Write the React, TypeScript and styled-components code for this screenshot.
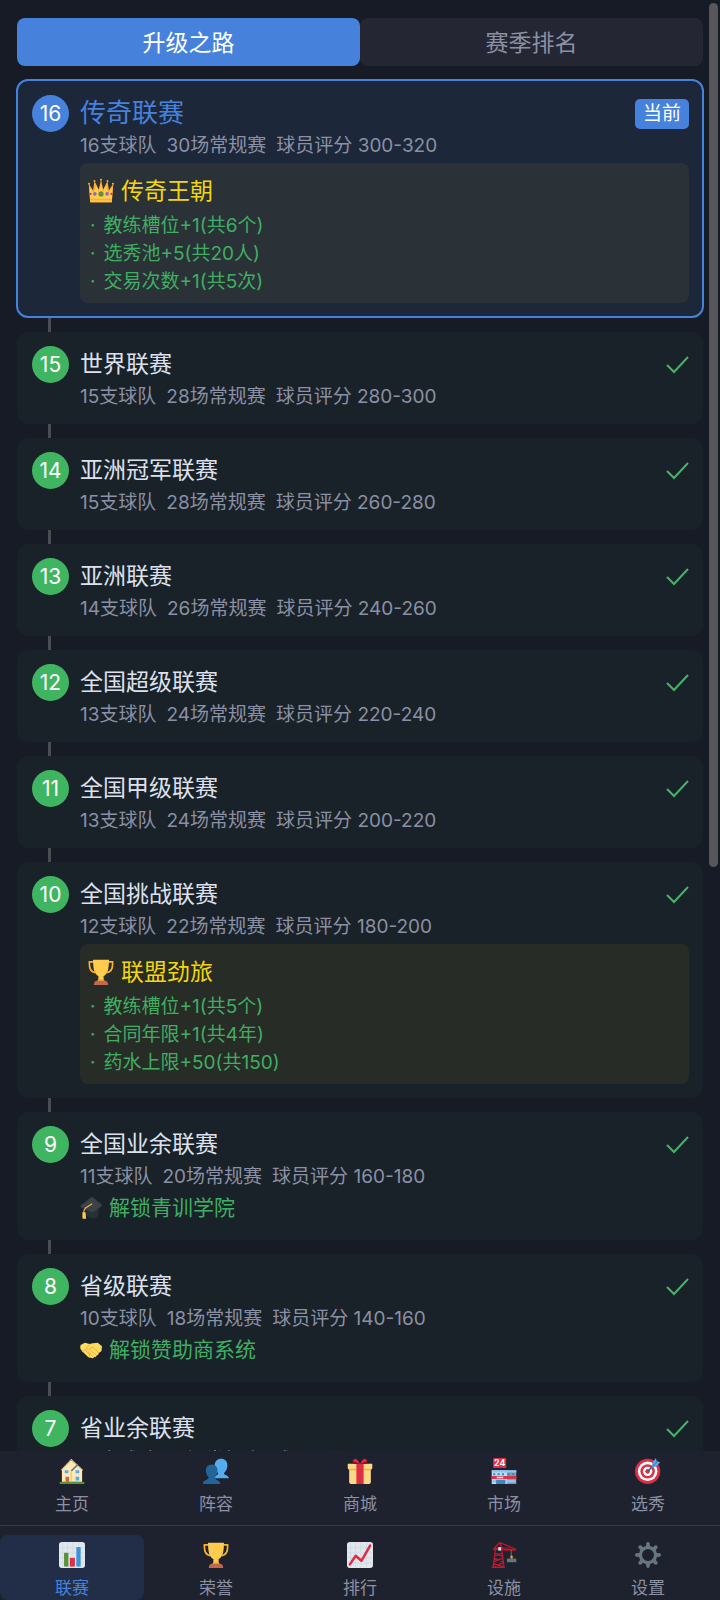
import React from "react";
import styled, { createGlobalStyle, css } from "styled-components";

const GlobalStyle = createGlobalStyle`
  * { box-sizing: border-box; }
  body {
    margin: 0;
    background: #171b25;
    font-family: Inter, "Noto Sans CJK SC", sans-serif;
    color: #dde1ee;
  }
  button { font: inherit; border: 0; margin: 0; padding: 0; cursor: pointer; }
  h2, h3, p, ul, ol { margin: 0; padding: 0; font-weight: 400; list-style: none; }
`;

const c = {
  blue: "#4682dc",
  green: "#40b561",
  greenText: "#3fae62",
  gold: "#f5d60c",
  muted: "#8b90a4",
  nav: "#1e222e",
};

/* ---------- emoji drawings ---------- */

const Svg = styled.svg<{ $size: number }>`
  display: block;
  flex: none;
  width: ${(p) => p.$size}px;
  height: ${(p) => p.$size}px;
`;

type EmojiName =
  | "crown" | "trophy" | "cap" | "handshake" | "house" | "people" | "gift"
  | "store" | "target" | "bars" | "chart" | "crane" | "gear";

const drawings: Record<EmojiName, React.ReactNode> = {
  crown: (
    <>
      <path fill="#ffac33" d="M1 8l6 9 2-13 6 12 3-14 3 14 6-12 2 13 6-9-2 26H3z" />
      <path fill="#ffcc4d" d="M2 13l6 8 3-10 4 8 3-11 3 11 4-8 3 10 6-8-1 20H3z" />
      <path fill="#ffac33" d="M3 29h30v2H3z" />
      <circle cx="1.500" cy="8" r="1.400" fill="#ffac33" />
      <circle cx="34.500" cy="8" r="1.400" fill="#ffac33" />
      <circle cx="9" cy="4" r="1.400" fill="#ffac33" />
      <circle cx="27" cy="4" r="1.400" fill="#ffac33" />
      <circle cx="18" cy="2.500" r="1.400" fill="#ffac33" />
      <circle cx="18" cy="22" r="3.600" fill="#5c913b" />
      <circle cx="9.500" cy="22" r="2.500" fill="#9266cc" />
      <circle cx="26.500" cy="22" r="2.500" fill="#9266cc" />
      <circle cx="3.500" cy="22" r="1.600" fill="#dd2e44" />
      <circle cx="32.500" cy="22" r="1.600" fill="#dd2e44" />
    </>
  ),
  trophy: (
    <>
      <path fill="none" stroke="#ffac33" strokeWidth="2.400" d="M9 4H2c-.6 8 1 14 8 15M27 4h7c.6 8-1 14-8 15" />
      <path fill="#ffac33" d="M15 20h6l1 9 4 4H10l4-4z" />
      <path fill="#ffcc4d" d="M7 1h22c0 14-2 20-8 23v4h-6v-4C9 21 7 15 7 1z" />
      <path fill="#c1694f" d="M8 36c0-4 2-6 5-6h10c3 0 5 2 5 6z" />
    </>
  ),
  cap: (
    <>
      <path fill="#292f33" d="M10 16l16-4 4 6c1 7 0 13-2 15-5 3-13 2-18-3z" />
      <path fill="#3a4249" d="M1 14L18 1c1-1 2-1 3 0l14 11c1 1 1 2 0 3L22 25c-1 1-2 1-3 0L2 17c-1-1-2-2-1-3z" />
      <path fill="none" stroke="#ffac33" strokeWidth="2" d="M20 11L9 18c-2 2-3 5-3 9" />
      <path fill="#ffcc4d" d="M4 25h5l1 10c-2 1-4 1-6 0z" />
    </>
  ),
  handshake: (
    <>
      <path fill="#ef9645" d="M2 12l8-4 17 2 8 7-6 9-9 5-6-1L3 20z" />
      <path fill="#ffdc5d" d="M1 10l7-4 8 2 5-1 8-1 7 6-1 8-5 3c1 2-1 4-3 3 0 3-2 4-4 3-1 3-4 3-6 1-2 1-4 0-5-2L3 19C0 17 0 13 1 10z" />
      <path fill="none" stroke="#ef9645" strokeWidth="1.200" strokeLinecap="round" strokeLinejoin="round" d="M17 8l-6 6c-1 3 3 4 5 2l4-3 10 9M18 19l8 7M14 22l7 7M5 19l4-2 2 4 4 3 1 4" />
    </>
  ),
  house: (
    <>
      <path fill="#5c913b" d="M1 33h34v3H1z" />
      <path fill="#ffe8b6" d="M4 16L17 3l15 13v17H4z" />
      <path fill="#ffcc4d" d="M16 19h2v14h-2z" />
      <path fill="none" stroke="#d9c193" strokeWidth="1.400" d="M3 17L17 2l16 15" />
      <path fill="none" stroke="#66757f" strokeWidth="2.400" d="M17 18l9-9" />
      <path fill="#c1694f" d="M9 26h5v7H9z" />
      <path fill="#55acee" d="M8 17h5v4H8zM23 17h5v4h-5zM23 26h5v5h-5z" />
    </>
  ),
  people: (
    <>
      <path fill="#55acee" d="M16 28c1-5 5-4 5-7-7-6-7-20 4-20s11 14 4 20c0 3 6 2 7 7z" />
      <path fill="#226699" d="M0 36c0-6 7-5 8-9-6-6-6-18 4-18s10 12 4 18c1 4 7 3 8 9z" />
    </>
  ),
  gift: (
    <>
      <path fill="#fdd888" d="M3 11h30v22c0 2-1 3-3 3H6c-2 0-3-1-3-3z" />
      <path fill="#fdd888" d="M1 8h34v5c0 2-1 3-3 3H4c-2 0-3-1-3-3z" />
      <path fill="#fcab40" d="M3 15h30v2H3z" />
      <path fill="#dd2e44" d="M13 8h10v28H13z" />
      <path fill="#a0041e" d="M17 8C8 9 6 6 8 3c2-4 7 0 10 5 3-5 8-9 10-5 2 3 0 6-9 5z" />
      <path fill="#dd2e44" d="M17 8L8 4l3-3c3 0 5 3 6 7zM19 8l9-4-3-3c-3 0-5 3-6 7z" />
    </>
  ),
  store: (
    <>
      <rect x="3" width="18" height="14" rx="1" fill="#dd2e44" />
      <text x="12" y="11.500" textAnchor="middle" fontFamily="Inter, sans-serif" fontWeight="700" fontSize="12" fill="#fff">24</text>
      <path fill="#bdddf4" d="M1 17h22v19H1z" />
      <path fill="#8899a6" d="M22 17h13v19H22z" />
      <path fill="#88c9f9" d="M1 17h34v3H1z" />
      <path fill="#3b88c3" d="M3 21h3v3H3zM9 21h3v3H9zM15 21h3v3h-3zM23 21h3v3h-3zM29 21h3v3h-3zM7 30h13v6H7z" />
      <path fill="#dd2e44" d="M1 25h34v4H1z" />
      <path fill="#fff" d="M8 26h9v2H8z" />
      <path fill="#88c9f9" d="M2 30h5v4H2zM22 30h12v4H22z" />
    </>
  ),
  target: (
    <>
      <circle cx="17.500" cy="18.500" r="17.500" fill="#dd2e44" />
      <circle cx="17.500" cy="18.500" r="13.500" fill="#fff" />
      <circle cx="17.500" cy="18.500" r="10" fill="#dd2e44" />
      <circle cx="17.500" cy="18.500" r="6.500" fill="#fff" />
      <circle cx="17.500" cy="18.500" r="3.200" fill="#dd2e44" />
      <path stroke="#226699" strokeWidth="2" d="M18 18L28 8" />
      <path fill="#55acee" d="M24 7l5-7 1 5 5 1-6 6-6 1z" />
      <path stroke="#3b88c3" strokeWidth="1.500" d="M24 12l8-8" />
    </>
  ),
  bars: (
    <>
      <rect width="36" height="36" rx="4" fill="#e1e8ed" />
      <path stroke="#ccd6dd" strokeWidth="1" d="M5 1v34M12 1v34M19 1v34M27 1v34M1 8h34M1 15h34M1 22h34M1 29h34" />
      <path fill="#5c913b" d="M7 15h6v19H7z" />
      <path fill="#dd2e44" d="M15 22h7v12h-7z" />
      <path fill="#3b94d9" d="M24 7h6v27h-6z" />
    </>
  ),
  chart: (
    <>
      <rect width="36" height="36" rx="4" fill="#e1e8ed" />
      <path stroke="#ccd6dd" strokeWidth="1" d="M5 1v34M12 1v34M19 1v34M27 1v34M1 8h34M1 15h34M1 22h34M1 29h34" />
      <path fill="none" stroke="#dd2e44" strokeWidth="3.500" strokeLinecap="round" strokeLinejoin="round" d="M4 31l8-12 8 7L32 5" />
    </>
  ),
  crane: (
    <>
      <path fill="none" stroke="#be1931" strokeWidth="1.800" d="M6 10L3 35M15 10l3 25M5 15l11 5M16 15L4 20M4 22l13 6M17 22L3 28M3 30l14 4M17 29L3 34M5 9h11L12 1 4 9M12 1l21 8" />
      <path stroke="#be1931" strokeWidth="2" d="M1 35h18M3 10h32" />
      <path stroke="#8c1526" strokeWidth="1.600" d="M16 8h16M18 12h16" />
      <path fill="#ccd6dd" d="M10 7h4v5h-4z" />
      <path stroke="#66757f" strokeWidth="1.300" d="M28 11v9" />
      <path fill="#ffac33" d="M27 19h3v4h-3z" />
      <path fill="#66757f" d="M22 23h13v5H22z" />
    </>
  ),
  gear: (
    <g fill="#66757f">
      {[0, 45, 90, 135, 180, 225, 270, 315].map((a) => (
        <path key={a} transform={`rotate(${a} 18 18)`} d="M15 8l.6-6c.2-2.600 4.600-2.600 4.800 0L21 8z" />
      ))}
      <circle cx="18" cy="18" r="10.500" fill="none" stroke="#66757f" strokeWidth="4.400" />
    </g>
  ),
};

const Emoji = ({ name, size = 26 }: { name: EmojiName; size?: number }) => (
  <Svg viewBox="0 0 36 36" $size={size} aria-hidden="true">{drawings[name]}</Svg>
);

/* ---------- layout ---------- */

const Screen = styled.div`
  position: relative;
  display: flex;
  flex-direction: column;
  height: 100vh;
  overflow: hidden;
`;

const Content = styled.main`
  flex: 1;
  min-height: 0;
  padding: 18px 17px 0;
  overflow-y: auto;
  scrollbar-width: none;
`;

const ScrollThumb = styled.div`
  position: absolute;
  top: 3px;
  right: 2px;
  width: 9px;
  height: 54%;
  border-radius: 5px;
  background: #56565b;
`;

const Tabs = styled.div`
  display: flex;
  margin-bottom: 13px;
`;

const Tab = styled.button<{ $active?: boolean }>`
  flex: 1;
  height: 48px;
  padding-bottom: 3px;
  border-radius: 8px;
  font-size: 23px;
  background: ${(p) => (p.$active ? c.blue : "#242733")};
  color: ${(p) => (p.$active ? "#fff" : c.muted)};
`;

const Road = styled.ol`
  display: flex;
  flex-direction: column;
`;

const Connector = styled.li`
  width: 3px;
  height: 14px;
  margin-left: 31px;
  background: #4b4d55;
`;

const Card = styled.li<{ $current?: boolean }>`
  padding: 14px 14px 14px 15px;
  border-radius: 12px;
  background: #1a2229;
  ${(p) =>
    p.$current &&
    css`
      margin: 0 -1px;
      padding: 14px 13px 13px 14px;
      border: 2px solid ${c.blue};
      background: #1c273a;
    `}
`;

const CardHead = styled.div`
  display: flex;
  align-items: center;
  gap: 11px;
  height: 37px;
`;

const Level = styled.span<{ $current?: boolean }>`
  display: flex;
  align-items: center;
  justify-content: center;
  flex: none;
  width: 37px;
  height: 37px;
  border-radius: 50%;
  font-size: 21px;
  color: #fff;
  background: ${(p) => (p.$current ? c.blue : c.green)};
`;

const Name = styled.h2<{ $current?: boolean }>`
  flex: 1;
  padding-bottom: 1px;
  font-size: ${(p) => (p.$current ? 26 : 23)}px;
  line-height: 36px;
  color: ${(p) => (p.$current ? c.blue : "#dde1ee")};
`;

const Badge = styled.span`
  height: 30px;
  padding: 0 8px;
  border-radius: 5px;
  font-size: 19px;
  line-height: 29px;
  color: #fff;
  background: ${c.blue};
`;

const CardBody = styled.div`
  padding-left: 48px;
`;

const Stats = styled.p`
  display: flex;
  gap: 10px;
  font-size: 19px;
  line-height: 28px;
  margin-bottom: -1px;
  white-space: nowrap;
  color: ${c.muted};
`;

const Perks = styled.section<{ $current?: boolean }>`
  margin-top: 4px;
  padding: 10px 8px 7px;
  border-radius: 8px;
  background: ${(p) => (p.$current ? "#2a3238" : "#272c27")};
`;

const PerkTitle = styled.h3`
  display: flex;
  align-items: center;
  gap: 7px;
  margin-bottom: 3px;
  font-size: 23px;
  line-height: 36px;
  color: ${c.gold};
`;

const Perk = styled.li`
  display: flex;
  gap: 8px;
  padding-left: 2px;
  font-size: 19px;
  line-height: 28px;
  color: ${c.greenText};
`;

const Unlock = styled.p`
  display: flex;
  align-items: center;
  gap: 7px;
  margin: 4px 0;
  font-size: 21px;
  line-height: 28px;
  color: ${c.greenText};
`;

const Nav = styled.nav`
  flex: none;
  background: ${c.nav};
`;

const NavRow = styled.div`
  display: flex;
  & + & {
    margin-top: 9px;
    padding-top: 9px;
    border-top: 1px solid #383b47;
  }
`;

const NavItem = styled.button<{ $active?: boolean }>`
  display: flex;
  flex: 1;
  flex-direction: column;
  align-items: center;
  gap: 8px;
  height: 65px;
  padding-top: 7px;
  border-radius: 8px;
  font-size: 17px;
  line-height: 24px;
  background: ${(p) => (p.$active ? "#222e47" : "transparent")};
  color: ${(p) => (p.$active ? c.blue : c.muted)};
`;

const CheckMark = () => (
  <svg width="24" height="20" viewBox="0 0 24 20" role="img" aria-label="已完成">
    <path d="M2 10l7 7L23 2" fill="none" stroke="#43b567" strokeWidth="2" />
  </svg>
);

/* ---------- data ---------- */

type League = {
  level: number;
  name: string;
  teams: number;
  games: number;
  rating: string;
  perks?: { icon: EmojiName; title: string; items: string[] };
  unlock?: { icon: EmojiName; text: string };
};

const CURRENT = 16;

const leagues: League[] = [
  { level: 16, name: "传奇联赛", teams: 16, games: 30, rating: "300-320",
    perks: { icon: "crown", title: "传奇王朝", items: ["教练槽位+1(共6个)", "选秀池+5(共20人)", "交易次数+1(共5次)"] } },
  { level: 15, name: "世界联赛", teams: 15, games: 28, rating: "280-300" },
  { level: 14, name: "亚洲冠军联赛", teams: 15, games: 28, rating: "260-280" },
  { level: 13, name: "亚洲联赛", teams: 14, games: 26, rating: "240-260" },
  { level: 12, name: "全国超级联赛", teams: 13, games: 24, rating: "220-240" },
  { level: 11, name: "全国甲级联赛", teams: 13, games: 24, rating: "200-220" },
  { level: 10, name: "全国挑战联赛", teams: 12, games: 22, rating: "180-200",
    perks: { icon: "trophy", title: "联盟劲旅", items: ["教练槽位+1(共5个)", "合同年限+1(共4年)", "药水上限+50(共150)"] } },
  { level: 9, name: "全国业余联赛", teams: 11, games: 20, rating: "160-180", unlock: { icon: "cap", text: "解锁青训学院" } },
  { level: 8, name: "省级联赛", teams: 10, games: 18, rating: "140-160", unlock: { icon: "handshake", text: "解锁赞助商系统" } },
  { level: 7, name: "省业余联赛", teams: 10, games: 18, rating: "120-140" },
];

const navRows: { icon: EmojiName; label: string }[][] = [
  [
    { icon: "house", label: "主页" },
    { icon: "people", label: "阵容" },
    { icon: "gift", label: "商城" },
    { icon: "store", label: "市场" },
    { icon: "target", label: "选秀" },
  ],
  [
    { icon: "bars", label: "联赛" },
    { icon: "trophy", label: "荣誉" },
    { icon: "chart", label: "排行" },
    { icon: "crane", label: "设施" },
    { icon: "gear", label: "设置" },
  ],
];

const LeagueCard = ({ league }: { league: League }) => {
  const current = league.level === CURRENT;
  return (
    <Card $current={current}>
      <CardHead>
        <Level $current={current}>{league.level}</Level>
        <Name $current={current}>{league.name}</Name>
        {current ? <Badge>当前</Badge> : <CheckMark />}
      </CardHead>
      <CardBody>
        <Stats>
          <span>{league.teams}支球队</span>
          <span>{league.games}场常规赛</span>
          <span>球员评分 {league.rating}</span>
        </Stats>
        {league.perks && (
          <Perks $current={current}>
            <PerkTitle>
              <Emoji name={league.perks.icon} />
              {league.perks.title}
            </PerkTitle>
            <ul>
              {league.perks.items.map((item) => (
                <Perk key={item}>
                  <span>·</span>
                  {item}
                </Perk>
              ))}
            </ul>
          </Perks>
        )}
        {league.unlock && (
          <Unlock>
            <Emoji name={league.unlock.icon} size={22} />
            {league.unlock.text}
          </Unlock>
        )}
      </CardBody>
    </Card>
  );
};

export default function App() {
  return (
    <Screen>
      <GlobalStyle />
      <Content>
        <Tabs role="tablist">
          <Tab role="tab" aria-selected="true" $active>升级之路</Tab>
          <Tab role="tab" aria-selected="false">赛季排名</Tab>
        </Tabs>
        <Road>
          {leagues.map((league, i) => (
            <React.Fragment key={league.level}>
              {i > 0 && <Connector aria-hidden="true" />}
              <LeagueCard league={league} />
            </React.Fragment>
          ))}
        </Road>
      </Content>
      <ScrollThumb />
      <Nav>
        {navRows.map((row, i) => (
          <NavRow key={i}>
            {row.map((item) => (
              <NavItem key={item.label} $active={item.label === "联赛"}>
                <Emoji name={item.icon} />
                {item.label}
              </NavItem>
            ))}
          </NavRow>
        ))}
      </Nav>
    </Screen>
  );
}
